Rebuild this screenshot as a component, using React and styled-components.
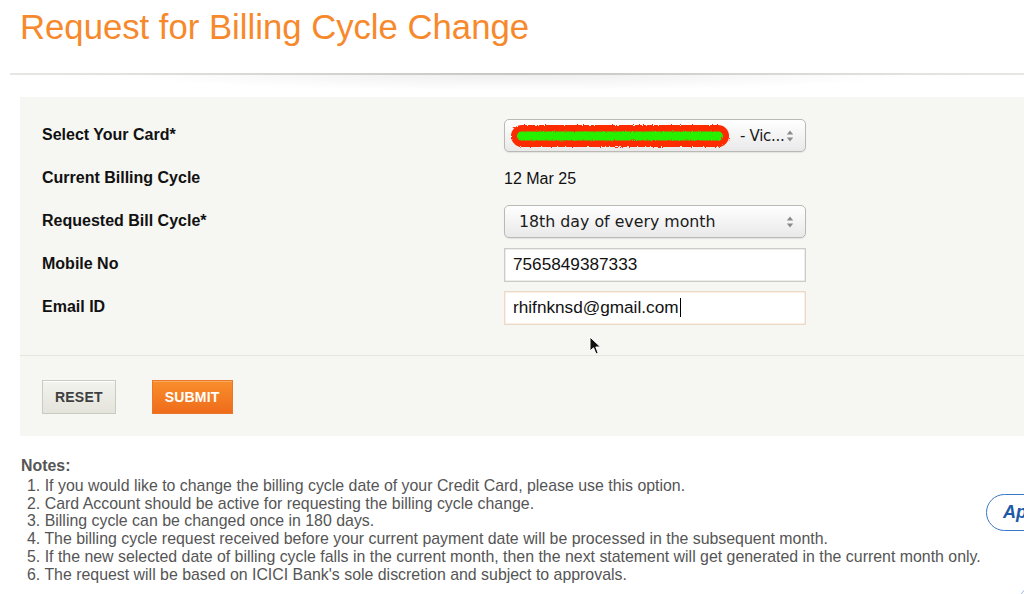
import React from "react";
import styled, { createGlobalStyle } from "styled-components";

const Global = createGlobalStyle`
  html, body { margin: 0; padding: 0; background: #ffffff; }
  body { font-family: "Liberation Sans", Arial, sans-serif; overflow: hidden; }
  * { box-sizing: border-box; }
`;

const Page = styled.div`
  position: relative;
  width: 1024px;
  height: 594px;
  padding-left: 10px;
  overflow: hidden;
`;

const Title = styled.h1`
  margin: 8px 0 0 10px;
  font-size: 34.7px;
  line-height: 39px;
  font-weight: normal;
  color: #f7892d;
`;

const Divider = styled.div`
  position: relative;
  margin-top: 26px;
  height: 2px;
  background: linear-gradient(to right, #e6e6e3 0%, #d6d6d0 50%, #e6e6e3 100%);
  &::after {
    content: "";
    display: block;
    height: 18px;
    background: radial-gradient(ellipse 40% 100% at 50% 0%, rgba(0,0,0,0.07), rgba(0,0,0,0) 100%);
  }
`;

const Panel = styled.section`
  margin: 22px 0 0 10px;
  background: #f6f6f2;
`;

const FormGrid = styled.div`
  display: grid;
  grid-template-columns: 462px 302px;
  grid-auto-rows: 43px;
  align-items: center;
  padding: 16px 0 27px 22px;
  border-bottom: 1px solid #e6e6e0;
`;

const Label = styled.div`
  font-size: 16px;
  font-weight: bold;
  color: #111;
`;

const Value = styled.div`
  font-size: 16px;
  color: #111;
  padding-top: 3px;
`;

const SelectBox = styled.div`
  position: relative;
  height: 33px;
  display: flex;
  align-items: center;
  padding: 0 30px 0 14px;
  border: 1px solid #b9b9b6;
  border-radius: 5px;
  background: linear-gradient(to bottom, #ffffff 0%, #f4f4f4 50%, #e9e9e9 100%);
  box-shadow: 0 1px 1px rgba(0,0,0,0.08);
  font-family: "DejaVu Sans", Verdana, sans-serif;
  font-size: 15.8px;
  color: #1a1a1a;
  margin-top: ${p => p.$offset || 0}px;
  white-space: nowrap;
  overflow: hidden;
`;

const Arrows = styled.svg`
  position: absolute;
  right: 11px;
  top: 50%;
  margin-top: -6px;
`;

const CardLine = styled.div`
  display: flex;
  align-items: center;
  gap: 9px;
  margin-left: -10px;
`;

const CardSuffix = styled.span`
  font-size: 15px;
  letter-spacing: -0.3px;
`;

const TextInput = styled.div`
  height: 34px;
  display: flex;
  align-items: center;
  padding: 0 8px;
  background: #ffffff;
  border: 1px solid ${p => (p.$focus ? "#ecd9c6" : "#cbcbc8")};
  box-shadow: inset 0 0 0 0.5px ${p => (p.$focus ? "#f2e2d2" : "#dcdcda")};
  font-size: 17.2px;
  color: #111;
  margin-top: ${p => p.$offset || 0}px;
`;

const Caret = styled.span`
  display: inline-block;
  width: 1px;
  height: 19px;
  background: #000;
  margin-left: 1px;
`;

const ButtonRow = styled.div`
  display: flex;
  gap: 36px;
  padding: 24px 0 22px 22px;
`;

const Button = styled.button`
  height: 34px;
  padding: 0 ${p => (p.$primary ? 12 : 12)}px;
  font-family: "Liberation Sans", Arial, sans-serif;
  font-size: 14px;
  font-weight: bold;
  letter-spacing: 0.2px;
  cursor: pointer;
  color: ${p => (p.$primary ? "#ffffff" : "#3f3f3f")};
  border: 1px solid ${p => (p.$primary ? "#e8772a" : "#cacac2")};
  background: ${p =>
    p.$primary
      ? "linear-gradient(to bottom, #f98e2c 0%, #ef6c1b 100%)"
      : "linear-gradient(to bottom, #f3f3ee 0%, #e4e4dc 100%)"};
  box-shadow: inset 0 1px 0 ${p => (p.$primary ? "rgba(255,255,255,0.25)" : "#ffffff")};
`;

const Notes = styled.div`
  margin: 21px 0 0 11px;
  color: #555555;
  font-size: 15.9px;
  line-height: 17.8px;
`;

const NotesTitle = styled.div`
  font-weight: bold;
`;

const NoteList = styled.ol`
  list-style: none;
  margin: 2px 0 0;
  padding: 0 0 0 6px;
`;

const NoteItem = styled.li`
  white-space: nowrap;
`;

const ApplyPill = styled.div`
  position: absolute;
  left: 986px;
  top: 494px;
  width: 90px;
  height: 37px;
  border: 1.5px solid #3a78c9;
  border-radius: 19px;
  background: #fff;
  padding-left: 16px;
  display: flex;
  align-items: center;
  font-size: 18px;
  font-weight: bold;
  font-style: italic;
  color: #1c5aa8;
`;

const ChatBubble = styled.div`
  position: absolute;
  left: 1018px;
  top: 584px;
  width: 40px;
  height: 40px;
  border: 1.5px solid #8fb3e3;
  border-radius: 50%;
`;

const Pointer = styled.svg`
  position: absolute;
  left: 589px;
  top: 336px;
`;

const Redaction = () => (
  <svg width="222" height="26" viewBox="0 0 222 26">
    <defs>
      <filter id="fuzz" x="-5%" y="-30%" width="110%" height="160%">
        <feTurbulence type="fractalNoise" baseFrequency="0.9" numOctaves="2" seed="3" result="n" />
        <feDisplacementMap in="SourceGraphic" in2="n" scale="3" />
      </filter>
    </defs>
    <g filter="url(#fuzz)">
      <rect x="2" y="2" width="218" height="22" rx="11" fill="#fe2a06" />
      <rect x="8" y="8.5" width="206" height="9" rx="4.5" fill="#27f004" />
    </g>
  </svg>
);

const SelectArrows = () => (
  <Arrows width="8" height="12" viewBox="0 0 8 12">
    <path d="M4 0.5 L7.2 4.5 H0.8 Z" fill="#8a8a8a" />
    <path d="M4 11.5 L7.2 7.5 H0.8 Z" fill="#8a8a8a" />
  </Arrows>
);

const notes = [
  "If you would like to change the billing cycle date of your Credit Card, please use this option.",
  "Card Account should be active for requesting the billing cycle change.",
  "Billing cycle can be changed once in 180 days.",
  "The billing cycle request received before your current payment date will be processed in the subsequent month.",
  "If the new selected date of billing cycle falls in the current month, then the next statement will get generated in the current month only.",
  "The request will be based on ICICI Bank's sole discretion and subject to approvals.",
];

export default function App() {
  return (
    <>
      <Global />
      <Page>
        <Title>Request for Billing Cycle Change</Title>
        <Divider />
        <Panel>
          <FormGrid>
            <Label>Select Your Card*</Label>
            <SelectBox $offset={2}>
              <CardLine>
                <Redaction />
                <CardSuffix>- Vic...</CardSuffix>
              </CardLine>
              <SelectArrows />
            </SelectBox>

            <Label>Current Billing Cycle</Label>
            <Value>12 Mar 25</Value>

            <Label>Requested Bill Cycle*</Label>
            <SelectBox $offset={2}>
              18th day of every month
              <SelectArrows />
            </SelectBox>

            <Label>Mobile No</Label>
            <TextInput $offset={2}>7565849387333</TextInput>

            <Label>Email ID</Label>
            <TextInput $focus $offset={2}>
              rhifnknsd@gmail.com<Caret />
            </TextInput>
          </FormGrid>
          <ButtonRow>
            <Button>RESET</Button>
            <Button $primary>SUBMIT</Button>
          </ButtonRow>
        </Panel>
        <Notes>
          <NotesTitle>Notes:</NotesTitle>
          <NoteList>
            {notes.map((n, i) => (
              <NoteItem key={i}>
                {i + 1}. {n}
              </NoteItem>
            ))}
          </NoteList>
        </Notes>
        <ApplyPill>Ap</ApplyPill>
        <ChatBubble />
        <Pointer width="14" height="20" viewBox="0 0 14 20">
          <path d="M1 1 L1 15 L4.5 11.8 L7 18 L9.2 17 L6.8 11 L11.5 11 Z" fill="#111" stroke="#fff" strokeWidth="1" />
        </Pointer>
      </Page>
    </>
  );
}
